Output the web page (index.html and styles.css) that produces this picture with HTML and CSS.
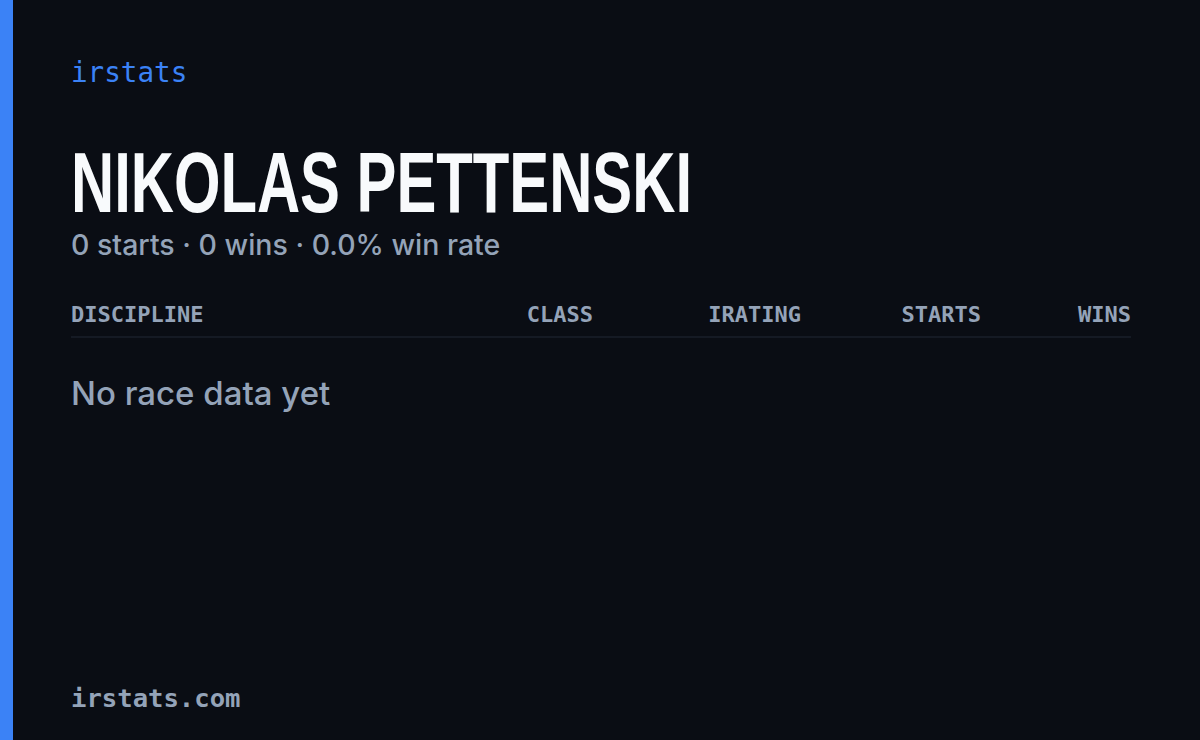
FILE: index.html
```html
<!DOCTYPE html>
<html lang="en">
<head>
    <meta charset="UTF-8">
    <meta name="viewport" content="width=device-width, initial-scale=1.0">
    <title>irstats - Nikolas Pettenski</title>
    <link rel="stylesheet" href="styles.css">
</head>
<body>
    <div class="card">
        <div class="accent"></div>
        <main class="content">
            <div class="brand">irstats</div>
            <h1 class="driver-name"><span>NIKOLAS PETTENSKI</span></h1>
            <p class="summary">0 starts · 0 wins · 0.0% win rate</p>
            <div class="table">
                <div class="table-head">
                    <span class="col col-discipline">DISCIPLINE</span>
                    <span class="col col-class">CLASS</span>
                    <span class="col col-irating">IRATING</span>
                    <span class="col col-starts">STARTS</span>
                    <span class="col col-wins">WINS</span>
                </div>
                <p class="empty">No race data yet</p>
            </div>
            <div class="footer">irstats.com</div>
        </main>
    </div>
</body>
</html>
```

FILE: styles.css
```css
html, body {
    margin: 0;
    padding: 0;
    background-color: #0a0d14;
}
.card {
    display: flex;
    width: 1200px;
    height: 740px;
    background-color: #0a0d14;
}
.accent {
    width: 13px;
    background-color: #3b82f6;
    flex-shrink: 0;
}
.content {
    flex: 1;
    display: flex;
    flex-direction: column;
    padding: 53px 69px 22px 58px;
}
.brand {
    font-family: "DejaVu Sans Mono", monospace;
    font-size: 27.6px;
    color: #3b82f6;
    line-height: 40px;
}
.driver-name {
    margin: 55px 0 0 0;
    font-family: "Liberation Sans", sans-serif;
    font-weight: 700;
    font-size: 86px;
    line-height: 68px;
    color: #f8fafc;
    white-space: nowrap;
}
.driver-name span {
    display: inline-block;
    transform: scaleX(0.695);
    transform-origin: left center;
}
.summary {
    margin: 11px 0 0 0;
    font-family: "Inter", sans-serif;
    font-size: 28.5px;
    font-weight: 500;
    line-height: 36px;
    color: #94a3b8;
}
.table {
    margin-top: 37px;
}
.table-head {
    display: grid;
    grid-template-columns: 1fr 120px 208px 180px 150px;
    padding-bottom: 6px;
    border-bottom: 2px solid #151a24;
    font-family: "DejaVu Sans Mono", monospace;
    font-size: 22px;
    font-weight: 700;
    line-height: 30px;
    color: #94a3b8;
}
.col {
    text-align: right;
}
.col-discipline {
    text-align: left;
}
.empty {
    margin: 33px 0 0 0;
    font-family: "Inter", sans-serif;
    font-size: 33px;
    font-weight: 500;
    line-height: 44px;
    color: #94a3b8;
}
.footer {
    margin-top: auto;
    font-family: "DejaVu Sans Mono", monospace;
    font-size: 25.6px;
    font-weight: 700;
    color: #94a3b8;
    line-height: 40px;
}
```
